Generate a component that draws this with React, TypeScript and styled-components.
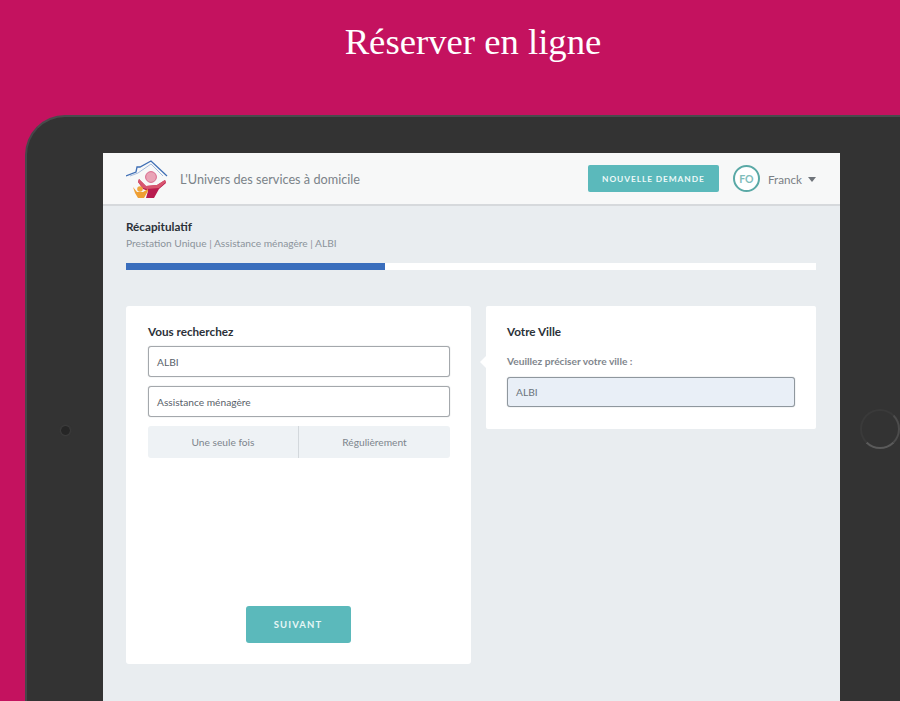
import styled, { createGlobalStyle } from "styled-components";

const GlobalStyle = createGlobalStyle`
  html, body {
    margin: 0;
    padding: 0;
    background: #c4125f;
  }
  * {
    box-sizing: border-box;
  }
`;

const Logo = () => (
  <LogoBox>
    <svg width="42" height="38" viewBox="5 6 42 38" fill="none">
      <path d="M5 22 L15 18 L16 13 L19 13 L30 7 L46 22" stroke="#3f6fb5" strokeWidth="1.3" />
      <path d="M9 22 L17 19 L30 10 L42 22" stroke="#9db4d8" strokeWidth="0.9" />
      <circle cx="30" cy="23" r="5.4" fill="#e9a3b6" stroke="#d9688c" strokeWidth="1" />
      <path d="M18 25 L25 32 L36 31 L44 26 L45 29 L38 35 L33 44 L25 44 L27 37 L22 35 L17 28 Z" fill="#b91c4f" />
      <path d="M18 25 L25 32 L36 31 L44 26 L45 28 L38 34 L26 35 L22 34 L17 28 Z" fill="#d8566f" />
      <circle cx="19" cy="35" r="2.8" fill="#f0a63c" />
      <path d="M12 33 L16 38 L22 38 L27 35 L27 37 L23 44 L17 44 L14 39 Z" fill="#ef9f33" />
    </svg>
  </LogoBox>
);

const App = () => {
  return (
    <>
      <GlobalStyle />
      <Page>
        <Title>Réserver en ligne</Title>
        <Tablet>
          <Camera />
          <HomeButton />
          <Screen>
            <Header>
              <Logo />
              <Brand>L'Univers des services à domicile</Brand>
              <NewRequestButton>NOUVELLE DEMANDE</NewRequestButton>
              <Avatar>FO</Avatar>
              <UserName>Franck</UserName>
              <Caret />
            </Header>
            <Content>
              <RecapTitle>Récapitulatif</RecapTitle>
              <RecapText>Prestation Unique | Assistance ménagère | ALBI</RecapText>
              <ProgressTrack>
                <ProgressFill style={{ width: `${(259 / 690) * 100}%` }} />
              </ProgressTrack>
              <Columns>
                <SearchCard>
                  <SearchTitle>Vous recherchez</SearchTitle>
                  <Field>ALBI</Field>
                  <Field>Assistance ménagère</Field>
                  <Segments>
                    <Segment>Une seule fois</Segment>
                    <Segment>Régulièrement</Segment>
                  </Segments>
                  <NextButton>SUIVANT</NextButton>
                </SearchCard>
                <CityCard>
                  <CityTitle>Votre Ville</CityTitle>
                  <CityLabel>Veuillez préciser votre ville :</CityLabel>
                  <CityField>ALBI</CityField>
                </CityCard>
              </Columns>
            </Content>
          </Screen>
        </Tablet>
      </Page>
    </>
  );
};

export default App;

const Page = styled.div`
  width: 900px;
  height: 701px;
  overflow: hidden;
  background: #c4125f;
  font-family: Lato, "Liberation Sans", sans-serif;
`;

const Title = styled.h1`
  margin: 0;
  height: 115px;
  padding: 19px 0 0 46px;
  text-align: center;
  color: #fff;
  font-family: "Liberation Serif", serif;
  font-size: 36.7px;
  font-weight: 400;
  line-height: 46px;
`;

const Tablet = styled.div`
  position: relative;
  width: 920px;
  height: 640px;
  margin-left: 25px;
  padding: 36px 0 0 76px;
  background: #333333;
  border-top: 2px solid #4a4a4c;
  border-left: 2px solid #47464a;
  border-radius: 40px 40px 0 0;
`;

const Camera = styled.div`
  position: absolute;
  left: 34px;
  top: 309px;
  width: 9px;
  height: 9px;
  border-radius: 50%;
  background: #262626;
  box-shadow: 0 0 2px #555;
`;

const HomeButton = styled.div`
  position: absolute;
  left: 833px;
  top: 292px;
  width: 40px;
  height: 40px;
  border-radius: 50%;
  border: 2px solid #3a3a3a;
  border-bottom-color: #5a5a5a;
  border-right-color: #4c4c4c;
`;

const Screen = styled.div`
  width: 737px;
  height: 600px;
  background: #e9edf0;
`;

const Header = styled.header`
  display: flex;
  align-items: center;
  height: 53px;
  padding: 0 24px 0 23px;
  background: #f7f8f8;
  border-bottom: 2px solid #d6d9dc;
`;

const LogoBox = styled.div`
  display: flex;
  width: 42px;
  height: 38px;
  margin-right: 12px;
`;

const Brand = styled.div`
  flex: 1;
  color: #7b8389;
  font-size: 12.7px;
`;

const NewRequestButton = styled.button`
  width: 131px;
  height: 27px;
  padding: 0;
  border: none;
  border-radius: 2px;
  background: #5bb9bb;
  color: #ecf8f8;
  font-family: inherit;
  font-size: 8.4px;
  font-weight: 700;
  letter-spacing: 0.9px;
`;

const Avatar = styled.div`
  display: flex;
  align-items: center;
  justify-content: center;
  width: 27px;
  height: 27px;
  margin-left: 14px;
  border: 2px solid #5aa9a6;
  border-radius: 50%;
  background: #fff;
  color: #7fbdbb;
  font-size: 10.5px;
  font-weight: 700;
`;

const UserName = styled.div`
  margin-left: 8px;
  color: #7a7f85;
  font-size: 11.7px;
`;

const Caret = styled.div`
  width: 0;
  height: 0;
  margin: 1px 0 0 6px;
  border-left: 4.5px solid transparent;
  border-right: 4.5px solid transparent;
  border-top: 5px solid #6f747a;
`;

const Content = styled.main`
  padding: 12px 24px 0 23px;
`;

const RecapTitle = styled.div`
  color: #2b3138;
  font-size: 11.7px;
  font-weight: 700;
  line-height: 16px;
`;

const RecapText = styled.div`
  margin-top: 1px;
  color: #8b939b;
  font-size: 10.2px;
  line-height: 16px;
`;

const ProgressTrack = styled.div`
  height: 7px;
  margin-top: 12px;
  background: #fff;
`;

const ProgressFill = styled.div`
  height: 100%;
  background: #3a6ebd;
`;

const Columns = styled.div`
  display: flex;
  align-items: flex-start;
  gap: 15px;
  margin-top: 36px;
`;

const SearchCard = styled.section`
  display: flex;
  flex-direction: column;
  width: 345px;
  height: 358px;
  padding: 17px 21px 0 22px;
  background: #fff;
  border-radius: 3px;
`;

const SearchTitle = styled.h2`
  margin: 0 0 6px;
  color: #2b3138;
  font-size: 11.7px;
  font-weight: 700;
  line-height: 17px;
`;

const Field = styled.div`
  display: flex;
  align-items: center;
  height: 31px;
  margin-bottom: 9px;
  padding: 0 8px;
  background: #fff;
  border: 1px solid #a4a8ac;
  box-shadow: 0 0 1px #a4a8ac;
  border-radius: 3px;
  color: #59616a;
  font-size: 10.2px;
`;

const Segments = styled.div`
  display: grid;
  grid-template-columns: 150px 1fr;
  height: 32px;
  background: #eef2f5;
  border-radius: 3px;
`;

const Segment = styled.div`
  display: flex;
  align-items: center;
  justify-content: center;
  color: #7d858d;
  font-size: 10.2px;

  & + & {
    border-left: 1px solid #d3d8dc;
  }
`;

const NextButton = styled.button`
  align-self: center;
  width: 105px;
  height: 37px;
  margin: 148px 2px 0 0;
  padding: 0;
  border: none;
  border-radius: 3px;
  background: #5bb9bb;
  color: #e6f6f6;
  font-family: inherit;
  font-size: 9.5px;
  font-weight: 700;
  letter-spacing: 1.1px;
`;

const CityCard = styled.section`
  position: relative;
  width: 330px;
  height: 123px;
  padding: 17px 21px 0;
  background: #fff;
  border-radius: 2px;

  &::before {
    content: "";
    position: absolute;
    left: -6px;
    top: 50px;
    border-top: 6px solid transparent;
    border-bottom: 6px solid transparent;
    border-right: 6px solid #fff;
  }
`;

const CityTitle = styled.h2`
  margin: 0;
  color: #2b3138;
  font-size: 11.7px;
  font-weight: 700;
  line-height: 17px;
`;

const CityLabel = styled.div`
  margin-top: 13px;
  color: #7f868d;
  font-size: 10.2px;
  font-weight: 700;
  line-height: 16px;
`;

const CityField = styled.div`
  display: flex;
  align-items: center;
  height: 30px;
  margin-top: 8px;
  padding: 0 8px;
  width: 288px;
  background: #e9eff7;
  border: 1px solid #8f979e;
  box-shadow: 0 0 1px #8f979e;
  border-radius: 3px;
  color: #6b737b;
  font-size: 10.2px;
`;
